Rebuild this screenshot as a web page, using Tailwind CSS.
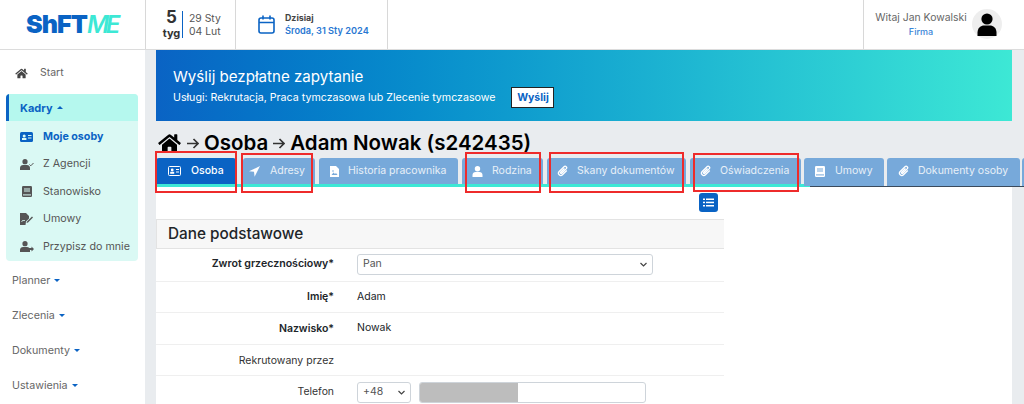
<!DOCTYPE html>
<html lang="pl">
<head>
<meta charset="utf-8">
<title>Osoba</title>
<script src="https://cdn.jsdelivr.net/npm/@tailwindcss/browser@4"></script>
</head>
<body class="w-[1024px] h-[404px] overflow-hidden relative bg-[#e9ecef] font-['Inter','Liberation_Sans',sans-serif] text-[#212529]">

<header class="h-[50px] flex bg-white border-b border-[#dcdcdc]">
  <div class="w-[146px] border-r border-[#d8d8d8] flex items-center pl-[26px]">
    <span class="text-[25px] leading-none font-black tracking-[-0.9px] text-[#0a63c4]">ShFT</span><span class="text-[24px] leading-none font-semibold italic tracking-[-3.5px] text-[#3de8d5]">ME</span>
  </div>
  <div class="w-[90px] border-r border-[#d8d8d8] flex items-center pl-[17px]">
    <div class="flex flex-col items-center w-[17px] pb-[1px]">
      <span class="text-[17px] leading-[17px] font-bold text-[#333]">5</span>
      <span class="text-[11px] leading-[14px] font-bold text-[#333]">tyg</span>
    </div>
    <div class="w-[1px] h-[27px] bg-[#0a63c4] ml-[2px]"></div>
    <div class="ml-[6px] pt-[1px] text-[10.4px] leading-[13px] text-[#555]"><div>29 Sty</div><div>04 Lut</div></div>
  </div>
  <div class="w-[152px] border-r border-[#d8d8d8] flex items-center pl-[22px]">
    <svg class="w-[17px] h-[19px]" viewBox="0 0 17 19" fill="none" stroke="#0a63c4" stroke-width="1.6"><rect x="1" y="3" width="15" height="15" rx="2"/><path d="M1 7.500h15M5 .5v4M12 .5v4"/></svg>
    <div class="ml-[10px]">
      <div class="text-[8.8px] leading-[12px] font-bold text-[#444]">Dzisiaj</div>
      <div class="text-[9.2px] leading-[13px] font-semibold text-[#2a78d2] whitespace-nowrap">Środa, 31 Sty 2024</div>
    </div>
  </div>
  <div class="flex-1"></div>
  <div class="w-[161px] border-l border-[#d8d8d8] flex items-start pl-[10px] pt-[9px]">
    <div class="w-[94px] text-center">
      <div class="text-[10.4px] leading-[17px] text-[#666] whitespace-nowrap">Witaj Jan Kowalski</div>
      <div class="text-[9px] leading-[12px] font-medium text-[#3a86d8]">Firma</div>
    </div>
    <div class="ml-[4px] w-[30px] h-[30px] rounded-full bg-[#eeeeee] flex items-center justify-center">
      <svg class="w-[20px] h-[23px]" viewBox="0 0 20 23" fill="#000"><circle cx="10" cy="6" r="5.600"/><path d="M.5 23v-3.500C.5 15 4 12.500 7 12.500h6c3 0 6.500 2.500 6.500 7V23z"/></svg>
    </div>
  </div>
</header>

<div class="flex h-[354px]">
  <aside class="w-[145px] bg-white shrink-0 text-[10.7px] text-[#555]">
    <div class="h-[44px] flex items-center pl-[15px] pt-[2px]">
      <svg class="w-[13px] h-[11px]" viewBox="0 0 576 512" fill="#444"><path d="M280 148 96 300v164a16 16 0 0 0 16 16l112-.3a16 16 0 0 0 16-16V368a16 16 0 0 1 16-16h64a16 16 0 0 1 16 16v95.600a16 16 0 0 0 16 16l112 .4a16 16 0 0 0 16-16V300L296 148a12 12 0 0 0-16 0zM572 251l-84-69V44a12 12 0 0 0-12-12h-56a12 12 0 0 0-12 12v72l-89-73a48 48 0 0 0-61 0L4 251a12 12 0 0 0-2 17l26 31a12 12 0 0 0 17 2L280 107a12 12 0 0 1 16 0l235 194a12 12 0 0 0 17-2l26-31a12 12 0 0 0-2-17z"/></svg>
      <span class="ml-[12px] text-[10.5px] text-[#666]">Start</span>
    </div>
    <div class="ml-[6px] w-[132px] rounded-[4px] bg-[#daf9f4] overflow-hidden">
      <div class="h-[27px] pt-[1px] bg-[#b5f8ee] border-l-[3px] border-[#0a63c4] flex items-center pl-[11px] text-[11px] font-bold text-[#0a63c4]">
        Kadry<span class="ml-[4px] mb-[2px] w-0 h-0 border-x-[3px] border-x-transparent border-b-[3px] border-b-[#0a63c4]"></span>
      </div>
      <div class="pt-[2px]">
        <div class="h-[27.500px] flex items-center pl-[14px] font-bold text-[#0a63c4]">
          <svg class="w-[13px] h-[10px] shrink-0" viewBox="0 0 13 10"><rect width="13" height="10" rx="1.500" fill="#0a63c4"/><circle cx="4.200" cy="4" r="1.500" fill="#daf9f4"/><rect x="2" y="6" width="4.400" height="2" fill="#daf9f4"/><rect x="8" y="3" width="3.500" height="1" fill="#daf9f4"/><rect x="8" y="5.500" width="3.500" height="1" fill="#daf9f4"/></svg>
          <span class="ml-[10px]">Moje osoby</span>
        </div>
        <div class="h-[27.500px] flex items-center pl-[14px]">
          <svg class="w-[14px] h-[11px] shrink-0" viewBox="0 0 14 11" fill="#555"><circle cx="5" cy="2.700" r="2.600"/><path d="M0 11V9c0-2 1.500-3 3-3h4c1.500 0 3 1 3 3v2z"/><path d="M9.500 5.500l1.300 1.300L13.500 4" fill="none" stroke="#555" stroke-width="1"/></svg>
          <span class="ml-[9px]">Z Agencji</span>
        </div>
        <div class="h-[27.500px] flex items-center pl-[16px]">
          <svg class="w-[10px] h-[11px] shrink-0" viewBox="0 0 10 11"><rect width="10" height="11" rx="1.200" fill="#555"/><rect x="2" y="2.500" width="6" height="1" fill="#daf9f4"/><rect x="2" y="4.500" width="6" height="1" fill="#daf9f4"/><rect x="1" y="8.400" width="8" height="1" fill="#daf9f4"/></svg>
          <span class="ml-[11px]">Stanowisko</span>
        </div>
        <div class="h-[27.500px] flex items-center pl-[14px]">
          <svg class="w-[13px] h-[12px] shrink-0" viewBox="0 0 13 12" fill="#555"><path d="M0 0h6l3 3v2.500L6 8.500 5.500 12H0z"/><path d="M7 8.500l5-5 1 1-5 5-1.500.5z"/><path d="M1.500 9l1.500-2 1 1 1-1" fill="none" stroke="#daf9f4" stroke-width=".8"/></svg>
          <span class="ml-[10px]">Umowy</span>
        </div>
        <div class="h-[27.500px] flex items-center pl-[14px]">
          <svg class="w-[14px] h-[11px] shrink-0" viewBox="0 0 14 11" fill="#555"><circle cx="5" cy="2.700" r="2.600"/><path d="M0 11V9c0-2 1.500-3 3-3h4c1.500 0 3 1 3 3v2z"/><path d="M9 7h2.500V5.500L14 8l-2.500 2.500V9H9z"/></svg>
          <span class="ml-[9px] whitespace-nowrap">Przypisz do mnie</span>
        </div>
      </div>
    </div>
    <div class="pl-[12px] text-[#666]">
      <div class="h-[35px] mt-[3px] flex items-center">Planner<span class="ml-[4px] mb-[1px] w-0 h-0 border-x-[3px] border-x-transparent border-t-[3px] border-t-[#0a63c4]"></span></div>
      <div class="h-[35px] flex items-center">Zlecenia<span class="ml-[4px] mb-[1px] w-0 h-0 border-x-[3px] border-x-transparent border-t-[3px] border-t-[#0a63c4]"></span></div>
      <div class="h-[35px] flex items-center">Dokumenty<span class="ml-[4px] mb-[1px] w-0 h-0 border-x-[3px] border-x-transparent border-t-[3px] border-t-[#0a63c4]"></span></div>
      <div class="h-[35px] flex items-center">Ustawienia<span class="ml-[4px] mb-[1px] w-0 h-0 border-x-[3px] border-x-transparent border-t-[3px] border-t-[#0a63c4]"></span></div>
    </div>
  </aside>

  <main class="flex-1 min-w-0 pl-[11px] pr-[12px]">
    <div class="h-[71px] bg-gradient-to-r from-[#0a63c4] to-[#3de8d5] pl-[17px] text-white">
      <div class="pt-[17px] text-[15.100px] leading-[20px]">Wyślij bezpłatne zapytanie</div>
      <div class="flex items-center h-[21px]">
        <span class="text-[10.650px] whitespace-nowrap">Usługi: Rekrutacja, Praca tymczasowa lub Zlecenie tymczasowe</span>
        <span class="ml-[16px] h-[21px] w-[43px] flex items-center justify-center bg-white text-[#0a63c4] border border-[#222] text-[10.500px] font-bold">Wyślij</span>
      </div>
    </div>

    <div class="h-[37px] flex items-end pb-[3px] text-[20.500px] leading-[24px] font-semibold text-black whitespace-nowrap">
      <svg class="w-[25px] h-[20px] ml-[1px] mb-[2px] shrink-0" viewBox="0 0 576 512" fill="#000"><path d="M280 148 96 300v164a16 16 0 0 0 16 16l112-.3a16 16 0 0 0 16-16V368a16 16 0 0 1 16-16h64a16 16 0 0 1 16 16v95.600a16 16 0 0 0 16 16l112 .4a16 16 0 0 0 16-16V300L296 148a12 12 0 0 0-16 0zM572 251l-84-69V44a12 12 0 0 0-12-12h-56a12 12 0 0 0-12 12v72l-89-73a48 48 0 0 0-61 0L4 251a12 12 0 0 0-2 17l26 31a12 12 0 0 0 17 2L280 107a12 12 0 0 1 16 0l235 194a12 12 0 0 0 17-2l26-31a12 12 0 0 0-2-17z"/></svg>
      <svg class="w-[12px] h-[11px] ml-[5px] mr-[5px] mb-[6px] shrink-0" viewBox="0 0 12 11" fill="none" stroke="#333" stroke-width="1.700"><path d="M0 5.500h11M6.500 1l4.500 4.500L6.500 10"/></svg>
      <span>Osoba</span>
      <svg class="w-[12px] h-[11px] ml-[5px] mr-[5px] mb-[6px] shrink-0" viewBox="0 0 12 11" fill="none" stroke="#333" stroke-width="1.700"><path d="M0 5.500h11M6.500 1l4.500 4.500L6.500 10"/></svg>
      <span>Adam Nowak (s242435)</span>
    </div>

    <div class="h-[29px] flex text-[10.500px] text-white relative">
      <div class="absolute left-0 bottom-0 h-[3px] w-[654px] bg-[#3de8d5]"></div>
      <div class="absolute left-[654px] right-[-12px] bottom-0 h-[1px] bg-[#3a4a5c]"></div>
      <div class="relative w-[80px] h-[26px] rounded-t-[3px] bg-[#0a63c4] flex items-center pl-[12px] font-medium shrink-0">
        <svg class="w-[13px] h-[10px] shrink-0" viewBox="0 0 13 10"><rect x=".5" y=".5" width="12" height="9" rx="1" fill="none" stroke="#fff"/><circle cx="4.200" cy="4" r="1.400" fill="#fff"/><rect x="2.200" y="5.800" width="4" height="2" fill="#fff"/><rect x="8" y="3" width="3" height="1" fill="#fff"/><rect x="8" y="5.500" width="3" height="1" fill="#fff"/></svg>
        <span class="ml-[10px]">Osoba</span>
      </div>
      <div class="relative ml-[7px] w-[72px] h-[26px] rounded-t-[3px] bg-[#77a9da] flex items-center pl-[6px] shrink-0">
        <svg class="w-[11px] h-[11px] shrink-0" viewBox="0 0 11 11" fill="#fff"><path d="M11 0 0 5.300l5 .4.600 5z"/></svg>
        <span class="ml-[10px] text-[#e8f0f8]">Adresy</span>
      </div>
      <div class="relative ml-[4px] w-[139px] h-[26px] rounded-t-[3px] bg-[#77a9da] flex items-center pl-[11px] shrink-0">
        <svg class="w-[9px] h-[11px] shrink-0" viewBox="0 0 9 11"><path d="M0 0h6l3 3v8H0z" fill="#fff"/><path d="M1.500 9l2-2.500 1.500 1.500 1-1 1.500 2z" fill="#77a9da"/><circle cx="3" cy="5" r=".8" fill="#77a9da"/></svg>
        <span class="ml-[9px] whitespace-nowrap text-[#e8f0f8]">Historia pracownika</span>
      </div>
      <div class="relative ml-[4px] w-[81px] h-[26px] rounded-t-[3px] bg-[#77a9da] flex items-center pl-[10px] shrink-0">
        <svg class="w-[11px] h-[11px] shrink-0" viewBox="0 0 11 11" fill="#fff"><circle cx="5.500" cy="2.800" r="2.700"/><path d="M.5 11V9c0-2 1.500-3 3-3h4c1.500 0 3 1 3 3v2z"/></svg>
        <span class="ml-[9px] text-[#e8f0f8]">Rodzina</span>
      </div>
      <div class="relative ml-[4px] w-[139px] h-[26px] rounded-t-[3px] bg-[#77a9da] flex items-center pl-[10px] shrink-0">
        <svg class="w-[11px] h-[12px] shrink-0" viewBox="0 0 11 12" fill="none" stroke="#fff" stroke-width="1.300"><path d="M9.800 5.500 5.500 9.800a2.300 2.300 0 0 1-3.300-3.300l4.800-4.800a1.500 1.500 0 0 1 2.200 2.200L4.700 8.300a.7.700 0 0 1-1-1l3.800-3.800"/></svg>
        <span class="ml-[9px] whitespace-nowrap text-[#e8f0f8]">Skany dokumentów</span>
      </div>
      <div class="relative ml-[4px] w-[111px] h-[26px] rounded-t-[3px] bg-[#77a9da] flex items-center pl-[10px] shrink-0">
        <svg class="w-[11px] h-[12px] shrink-0" viewBox="0 0 11 12" fill="none" stroke="#fff" stroke-width="1.300"><path d="M9.800 5.500 5.500 9.800a2.300 2.300 0 0 1-3.300-3.300l4.800-4.800a1.500 1.500 0 0 1 2.200 2.200L4.700 8.300a.7.700 0 0 1-1-1l3.800-3.800"/></svg>
        <span class="ml-[9px] whitespace-nowrap text-[#e8f0f8]">Oświadczenia</span>
      </div>
      <div class="relative ml-[3px] w-[80px] h-[28px] rounded-t-[3px] bg-[#77a9da] flex items-center pl-[11px] pb-[2px] shrink-0">
        <svg class="w-[10px] h-[11px] shrink-0" viewBox="0 0 10 11"><rect width="10" height="11" rx="1.200" fill="#fff"/><rect x="2" y="2.500" width="6" height="1" fill="#77a9da"/><rect x="2" y="4.500" width="6" height="1" fill="#77a9da"/><rect x="1" y="8.400" width="8" height="1" fill="#77a9da"/></svg>
        <span class="ml-[10px] text-[#e8f0f8]">Umowy</span>
      </div>
      <div class="relative ml-[3px] w-[133px] h-[28px] rounded-t-[3px] bg-[#77a9da] flex items-center pl-[11px] pb-[2px] shrink-0">
        <svg class="w-[11px] h-[12px] shrink-0" viewBox="0 0 11 12" fill="none" stroke="#fff" stroke-width="1.300"><path d="M9.800 5.500 5.500 9.800a2.300 2.300 0 0 1-3.300-3.300l4.800-4.800a1.500 1.500 0 0 1 2.200 2.200L4.700 8.300a.7.700 0 0 1-1-1l3.800-3.800"/></svg>
        <span class="ml-[9px] whitespace-nowrap text-[#e8f0f8]">Dokumenty osoby</span>
      </div>
      <div class="relative ml-[2px] w-[4px] h-[28px] rounded-tl-[3px] bg-[#77a9da] shrink-0"></div>
    </div>

    <div class="h-[217px] bg-white">
      <div class="w-[568px] h-[32px] relative">
        <div class="absolute right-[6px] top-[6px] w-[19px] h-[19px] rounded-[3px] bg-[#0a63c4] flex items-center justify-center">
          <svg class="w-[11px] h-[9px]" viewBox="0 0 11 9" fill="#fff"><rect y=".5" width="2" height="1.500"/><rect x="3" y=".5" width="8" height="1.500"/><rect y="3.700" width="2" height="1.500"/><rect x="3" y="3.700" width="8" height="1.500"/><rect y="7" width="2" height="1.500"/><rect x="3" y="7" width="8" height="1.500"/></svg>
        </div>
      </div>
      <div class="w-[568px]">
        <div class="h-[30px] bg-[#f7f7f7] border-y border-[#e3e3e3] border-l flex items-center pl-[11px] text-[15.300px] font-medium text-[#212529]">Dane podstawowe</div>
        <div class="h-[33px] border-b border-[#efefef] flex items-center">
          <div class="w-[178px] text-right text-[10.600px] font-semibold whitespace-nowrap pb-[2px]">Zwrot grzecznościowy*</div>
          <div class="ml-[23px] w-[296px] h-[21px] mb-[2px] border border-[#ced4da] rounded-[3px] flex items-center justify-between pl-[5px] pr-[5px] text-[10.500px] text-[#555]">
            <span>Pan</span>
            <svg class="w-[7px] h-[5px]" viewBox="0 0 7 5" fill="none" stroke="#444" stroke-width="1.200"><path d="M.5 1l3 3 3-3"/></svg>
          </div>
        </div>
        <div class="h-[31px] border-b border-[#efefef] flex items-center">
          <div class="w-[178px] text-right text-[10.500px] font-semibold pb-[1px]">Imię*</div>
          <div class="ml-[23px] text-[10.500px] pb-[1px]">Adam</div>
        </div>
        <div class="h-[32px] border-b border-[#efefef] flex items-center">
          <div class="w-[178px] text-right text-[10.500px] font-semibold">Nazwisko*</div>
          <div class="ml-[23px] text-[10.500px] pb-[2px]">Nowak</div>
        </div>
        <div class="h-[31px] border-b border-[#efefef] flex items-center pt-[2px]">
          <div class="w-[178px] text-right text-[10.500px] text-[#333]">Rekrutowany przez</div>
        </div>
        <div class="h-[31px] flex items-center">
          <div class="w-[178px] text-right text-[10.400px] text-[#333]">Telefon</div>
          <div class="ml-[23px] mt-[1px] w-[54px] h-[21px] border border-[#ced4da] rounded-[3px] flex items-center justify-between pl-[5px] pr-[5px] text-[10.500px] text-[#555]">
            <span>+48</span>
            <svg class="w-[7px] h-[5px]" viewBox="0 0 7 5" fill="none" stroke="#444" stroke-width="1.200"><path d="M.5 1l3 3 3-3"/></svg>
          </div>
          <div class="ml-[8px] mt-[1px] w-[227px] h-[21px] border border-[#ced4da] rounded-[3px] overflow-hidden">
            <div class="w-[98px] h-full bg-[#bdbdbd]"></div>
          </div>
        </div>
      </div>
    </div>
  </main>
</div>

<div class="absolute left-[155px] top-[151px] w-[82px] h-[42px] border-2 border-[#ee2b2b]"></div>
<div class="absolute left-[241px] top-[153px] w-[72px] h-[40px] border-2 border-[#ee2b2b]"></div>
<div class="absolute left-[465px] top-[152px] w-[76px] h-[41px] border-2 border-[#ee2b2b]"></div>
<div class="absolute left-[549px] top-[152px] w-[135px] h-[41px] border-2 border-[#ee2b2b]"></div>
<div class="absolute left-[693px] top-[153px] w-[106px] h-[39px] border-2 border-[#ee2b2b]"></div>
</body>
</html>
